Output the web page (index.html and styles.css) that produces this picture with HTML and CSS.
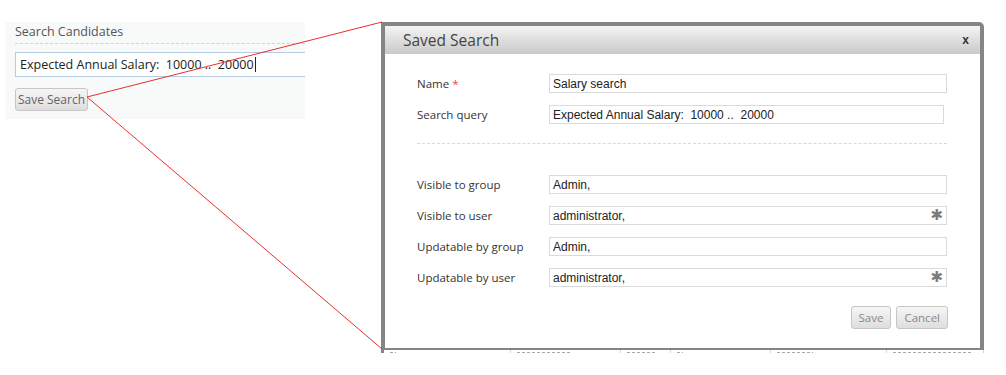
FILE: index.html
```html
<!DOCTYPE html>
<html lang="en">
<head>
    <meta charset="UTF-8">
    <meta name="viewport" content="width=device-width, initial-scale=1.0">
    <title>Saved Search</title>
    <link rel="stylesheet" href="styles.css">
</head>
<body>
    <div class="scene">
        <div class="search-panel">
            <div class="panel-title">Search Candidates</div>
            <div class="query-input">Expected Annual Salary:&nbsp; 10000 ..&nbsp; 20000<span class="caret"></span></div>
            <button class="grey-button save-search">Save Search</button>
        </div>

        <div class="dialog-shot">
            <div class="dialog">
                <div class="dialog-header">
                    <span class="dialog-title">Saved Search</span>
                    <span class="dialog-close">x</span>
                </div>
                <div class="dialog-body">
                    <div class="form-row">
                        <div class="form-label">Name <span class="required">*</span></div>
                        <div class="field">Salary search</div>
                    </div>
                    <div class="form-row">
                        <div class="form-label">Search query</div>
                        <div class="field field-short">Expected Annual Salary:&nbsp; 10000 ..&nbsp; 20000</div>
                    </div>
                    <div class="separator"></div>
                    <div class="form-row">
                        <div class="form-label">Visible to group</div>
                        <div class="field">Admin,</div>
                    </div>
                    <div class="form-row">
                        <div class="form-label">Visible to user</div>
                        <div class="field">administrator,<span class="pick">&#10033;</span></div>
                    </div>
                    <div class="form-row">
                        <div class="form-label">Updatable by group</div>
                        <div class="field">Admin,</div>
                    </div>
                    <div class="form-row">
                        <div class="form-label">Updatable by user</div>
                        <div class="field">administrator,<span class="pick">&#10033;</span></div>
                    </div>
                    <div class="dialog-actions">
                        <button class="grey-button">Save</button>
                        <button class="grey-button">Cancel</button>
                    </div>
                </div>
            </div>
            <div class="table-peek">
                <span class="peek-cell w1"><i class="ink" style="width: 6px"></i></span>
                <span class="peek-cell w2"><i class="ink" style="width: 54px"></i></span>
                <span class="peek-cell w3"><i class="ink" style="width: 28px"></i></span>
                <span class="peek-cell w4"><i class="ink" style="width: 6px"></i></span>
                <span class="peek-cell w5"><i class="ink" style="width: 36px"></i></span>
                <span class="peek-cell w6"><i class="ink" style="width: 80px"></i></span>
            </div>
        </div>

        <svg class="callout" width="1006" height="375" viewBox="0 0 1006 375">
            <line x1="87" y1="97" x2="382" y2="22" stroke="#e8302c" stroke-width="1"/>
            <line x1="87" y1="97" x2="382" y2="349" stroke="#e8302c" stroke-width="1"/>
        </svg>
    </div>
</body>
</html>
```

FILE: styles.css
```css
body {
    margin: 0;
    background: #ffffff;
    font-family: "Open Sans", Arial, sans-serif;
}
.scene {
    position: relative;
    width: 1006px;
    height: 375px;
    display: flex;
    align-items: flex-start;
    overflow: hidden;
}

/* left: the search box */
.search-panel {
    margin: 22px 0 0 5px;
    width: 290px;
    height: 97px;
    padding-left: 10px;
    background: #f8f9f9;
    overflow: hidden;
}
.panel-title {
    padding-top: 2px;
    padding-bottom: 3px;
    font-size: 12.5px;
    line-height: 16px;
    color: #555;
    border-bottom: 1px dashed #cfd3d6;
}
.query-input {
    box-sizing: border-box;
    margin-top: 8px;
    width: 320px;
    height: 25px;
    padding: 0 4px;
    line-height: 23px;
    font-size: 12.5px;
    color: #222;
    background: #fff;
    border: 1px solid #b4cce6;
    white-space: nowrap;
}
.caret {
    display: inline-block;
    width: 1px;
    height: 15px;
    margin-left: 1px;
    vertical-align: -3px;
    background: #222;
}
.grey-button {
    box-sizing: border-box;
    height: 23px;
    padding: 0 5px;
    font-family: "Open Sans", Arial, sans-serif;
    font-size: 11.5px;
    color: #777;
    white-space: nowrap;
    background: linear-gradient(#f6f6f6, #dedede);
    border: 1px solid #c6c6c6;
    border-radius: 3px;
}
.save-search {
    margin-top: 11px;
    width: 73px;
    padding: 0;
    font-size: 12px;
    color: #666;
}

/* right: the dialog */
.dialog-shot {
    margin: 22px 0 0 76px;
    width: 603px;
}
.dialog {
    border: 4px solid #858585;
    border-bottom-width: 2px;
    border-radius: 0 5px 0 0;
    background: #fff;
}
.dialog-header {
    display: flex;
    align-items: center;
    justify-content: space-between;
    height: 28px;
    padding: 0 11px 0 18px;
    background: linear-gradient(#f4f4f4, #c9c9c9);
}
.dialog-title {
    font-size: 15.5px;
    color: #444;
}
.dialog-close {
    font-family: Arial, sans-serif;
    font-size: 12px;
    font-weight: bold;
    color: #333;
}
.dialog-body {
    height: 274px;
    padding: 20px 33px 0 32px;
}
.form-row {
    display: flex;
    align-items: center;
    height: 19px;
    margin-bottom: 12px;
}
.form-label {
    width: 132px;
    flex-shrink: 0;
    font-size: 11.5px;
    color: #333;
}
.required {
    color: #e0474a;
}
.field {
    box-sizing: border-box;
    flex: 1;
    display: flex;
    align-items: center;
    justify-content: space-between;
    height: 19px;
    padding: 0 3px;
    font-family: Arial, "Liberation Sans", sans-serif;
    font-size: 12px;
    color: #222;
    border: 1px solid #dadada;
}
.field-short {
    margin-right: 3px;
}
.pick {
    font-family: "DejaVu Sans", sans-serif;
    font-size: 15px;
    line-height: 15px;
    color: #7c7c7c;
}
.separator {
    margin: 19px 0 31px;
    border-top: 1px dashed #d8d8d8;
}
.dialog-actions {
    display: flex;
    justify-content: flex-end;
    gap: 5px;
    margin: 19px -1px 0 0;
}
.dialog-actions .grey-button {
    padding: 0 7px;
    font-size: 11.5px;
    color: #888;
}

/* what shows of the page behind the dialog */
.table-peek {
    display: flex;
    height: 3px;
    overflow: hidden;
    background: #fff;
    border-left: 3px solid #858585;
}
.peek-cell {
    box-sizing: border-box;
    display: flex;
    align-items: flex-end;
    padding-left: 6px;
    border-right: 1px solid #d4d4d4;
}
.ink {
    display: block;
    height: 1px;
    background: repeating-linear-gradient(90deg, #aaa 0 3px, transparent 3px 5px);
}
.w1 { width: 127px; }
.w2 { width: 110px; }
.w3 { width: 50px; }
.w4 { width: 100px; }
.w5 { width: 116px; }
.w6 { width: 97px; }

.callout {
    position: absolute;
    top: 0;
    left: 0;
    pointer-events: none;
}
```
